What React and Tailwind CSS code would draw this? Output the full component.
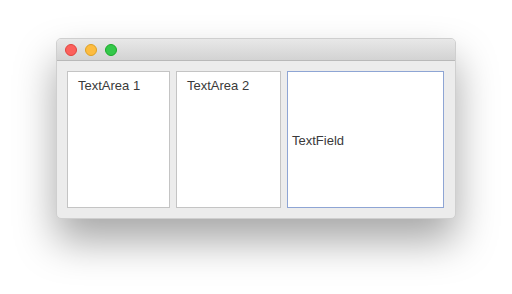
import React from 'react';

const TrafficLights = () => (
  <div className="flex items-center gap-[8px] pl-[8px]">
    <span className="w-[12px] h-[12px] rounded-full bg-[#fc605c] border border-[#e0443e]" />
    <span className="w-[12px] h-[12px] rounded-full bg-[#fdbc40] border border-[#dea123]" />
    <span className="w-[12px] h-[12px] rounded-full bg-[#34c84a] border border-[#1aab29]" />
  </div>
);

const TextArea = ({ label, width }) => (
  <div className={`${width} h-full bg-white border border-[#c4c4c4] pl-[10px] pt-[1px]`}>
    <span className="text-[13px] text-[#3a3a3a]">{label}</span>
  </div>
);

const App = () => {
  return (
    <div
      className="w-[512px] h-[294px] bg-white flex justify-center pt-[38px]"
      style={{ fontFamily: '"Liberation Sans", Arial, sans-serif' }}
    >
      <div className="w-[400px] h-[181px] flex flex-col rounded-[5px] bg-[#ececec] border border-[#cfcfcf] shadow-[0_22px_40px_rgba(0,0,0,0.35)] overflow-hidden">
        <div className="h-[22px] flex items-center bg-gradient-to-b from-[#e8e8e8] to-[#d3d3d3] border-b border-[#b9b9b9]">
          <TrafficLights />
        </div>
        <div className="flex-1 flex gap-[6px] pl-[10px] pr-[11px] pt-[10px] pb-[10px]">
          <TextArea label="TextArea 1" width="w-[103px]" />
          <TextArea label="TextArea 2" width="w-[105px]" />
          <div className="flex-1 h-full bg-white border border-[#8ea5d4] flex items-center pl-[4px] pt-[2px]">
            <span className="text-[13px] text-[#3a3a3a]">TextField</span>
          </div>
        </div>
      </div>
    </div>
  );
};

export default App;
